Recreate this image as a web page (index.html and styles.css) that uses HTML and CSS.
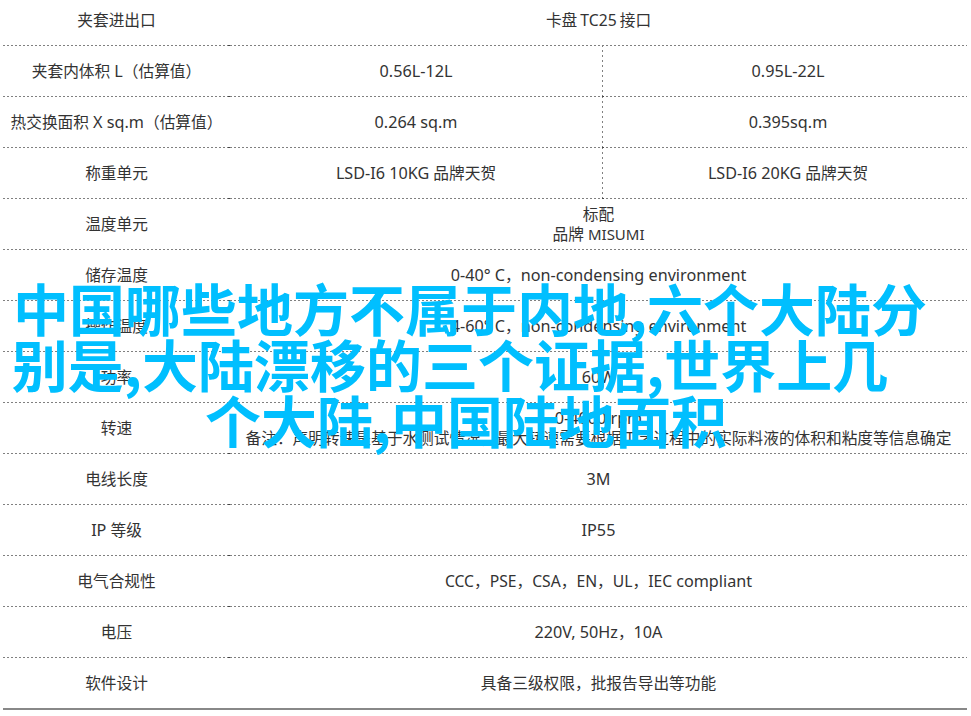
FILE: index.html
```html
<!DOCTYPE html>
<html lang="zh-CN">
<head>
<meta charset="utf-8">
<title>规格表</title>
<link rel="stylesheet" href="styles.css">
</head>
<body>
<div class="page">
  <table class="spec">
    <colgroup><col class="c1"><col class="c2"><col class="c3"></colgroup>
    <tr class="first"><td>夹套进出口</td><td colspan="2" class="tight">卡盘 <span class="cap-wide">TC25</span> 接口</td></tr>
    <tr><td>夹套内体积 <span class="en">L</span>（估算值）</td><td class="mid"><span class="en">0.56L-12L</span></td><td class="end"><span class="en">0.95L-22L</span></td></tr>
    <tr><td>热交换面积 <span class="en">X sq.m</span>（估算值）</td><td class="mid"><span class="en">0.264 sq.m</span></td><td class="end"><span class="en">0.395sq.m</span></td></tr>
    <tr><td>称重单元</td><td class="mid"><span class="en">LSD-I6 10KG</span> 品牌天贺</td><td class="end"><span class="en">LSD-I6 20KG</span> 品牌天贺</td></tr>
    <tr><td>温度单元</td><td colspan="2">标配<br>品牌 <span class="cap">MISUMI</span></td></tr>
    <tr><td>储存温度</td><td colspan="2"><span class="en">0-40° C</span>，<span class="en">non-condensing environment</span></td></tr>
    <tr><td>操作温度</td><td colspan="2"><span class="en">4-60° C</span>，<span class="en">non-condensing environment</span></td></tr>
    <tr><td>功率</td><td colspan="2"><span class="en">60W</span></td></tr>
    <tr><td>转速</td><td colspan="2"><span class="en">0-4000 rpm</span><br>备注：声明转速是基于水测试情况，最大转速需要根据工艺过程中的实际料液的体积和粘度等信息确定</td></tr>
    <tr><td>电线长度</td><td colspan="2"><span class="en">3M</span></td></tr>
    <tr><td><span class="en">IP</span> 等级</td><td colspan="2"><span class="en">IP55</span></td></tr>
    <tr><td>电气合规性</td><td colspan="2">CCC，PSE，CSA，EN，UL，IEC <span class="en">compliant</span></td></tr>
    <tr><td>电压</td><td colspan="2"><span class="en">220V, 50Hz</span>，<span class="en">10A</span></td></tr>
    <tr class="last"><td>软件设计</td><td colspan="2">具备三级权限，批报告导出等功能</td></tr>
  </table>
  <h1 class="headline">
    <span class="line line-a">中国哪些地方不属于内地,六个大陆分</span>
    <span class="line line-b">别是,大陆漂移的三个证据,世界上几</span>
    <span class="line line-c">个大陆,中国陆地面积</span>
  </h1>
</div>
</body>
</html>
```
FILE: styles.css
```css
html, body {
  margin: 0;
  padding: 0;
  background: #fff;
}

.page {
  position: relative;
  width: 971px;
  height: 716px;
  overflow: hidden;
  font-family: "Noto Sans", "Noto Sans CJK SC", sans-serif;
  color: #333;
}

.spec {
  margin-left: 3px;
  width: 964px;
  table-layout: fixed;
  border-collapse: separate;
  border-spacing: 0;
  font-size: 15.7px;
  line-height: 20px;
}

.en { font-size: 16.2px; }
.cap { font-size: 15px; }
.cap-wide { font-size: 15.7px; }
.spec .tight { word-spacing: -1px; }

.c1 { width: 227px; }
.c2 { width: 372px; }
.c3 { width: 365px; }

.spec td {
  height: 50px;
  padding: 0 0 1px;
  box-sizing: content-box;
  text-align: center;
  vertical-align: middle;
  background:
    repeating-linear-gradient(90deg, #808080 0 2px, transparent 2px 4px) left bottom / 100% 1px no-repeat;
}

.spec td:first-child {
  background:
    linear-gradient(#444, #444) right bottom / 2px 1px no-repeat,
    repeating-linear-gradient(90deg, #808080 0 2px, transparent 2px 4px) left bottom / 100% 1px no-repeat;
}

.spec .first td {
  height: 40px;
  padding-bottom: 6px;
}

.spec .last td,
.spec .last td:first-child {
  height: 50px;
  padding-bottom: 0;
  background: none;
  border-bottom: 2px solid #888;
}

.spec .end {
  padding-left: 7px;
  background:
    linear-gradient(#444, #444) left bottom / 2px 1px no-repeat,
    repeating-linear-gradient(90deg, #808080 0 2px, transparent 2px 4px) left bottom / 100% 1px no-repeat,
    repeating-linear-gradient(0deg, #808080 0 2px, transparent 2px 5px) left bottom / 1px 100% no-repeat;
}

.headline {
  position: absolute;
  top: 279px;
  left: 0;
  width: 971px;
  margin: 0;
  font-family: "Noto Sans CJK SC", sans-serif;
  font-size: 56px;
  line-height: 56px;
  font-weight: 700;
  color: #00bfff;
  text-align: center;
}

.line { display: block; white-space: nowrap; }
.line-a { margin-left: -31px; }
.line-b { margin-left: -71px; }
.line-c { margin-left: -39px; }
```
